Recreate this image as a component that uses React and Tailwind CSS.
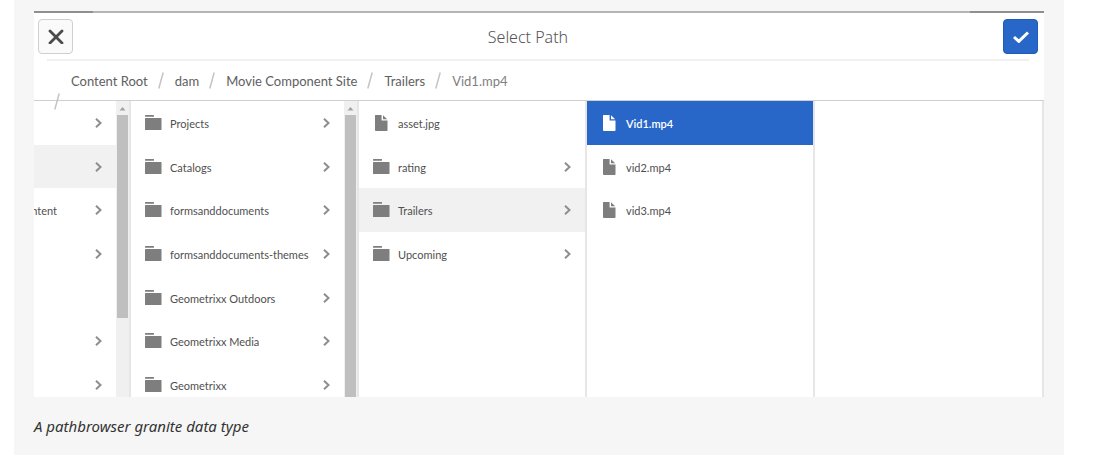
import React from "react";

const columns = [
  {
    id: "root",
    clipped: true,
    thumb: "h-[203px]",
    items: [
      { arrow: true },
      { arrow: true, active: true },
      { name: "ntent", arrow: true },
      { arrow: true },
      {},
      { arrow: true },
      { arrow: true },
    ],
  },
  {
    id: "dam",
    thumb: "flex-1",
    items: [
      { name: "Projects", type: "folder", arrow: true },
      { name: "Catalogs", type: "folder", arrow: true },
      { name: "formsanddocuments", type: "folder", arrow: true },
      { name: "formsanddocuments-themes", type: "folder", arrow: true },
      { name: "Geometrixx Outdoors", type: "folder", arrow: true },
      { name: "Geometrixx Media", type: "folder", arrow: true },
      { name: "Geometrixx", type: "folder", arrow: true },
    ],
  },
  {
    id: "site",
    items: [
      { name: "asset.jpg", type: "file" },
      { name: "rating", type: "folder", arrow: true },
      { name: "Trailers", type: "folder", arrow: true, active: true },
      { name: "Upcoming", type: "folder", arrow: true },
    ],
  },
  {
    id: "trailers",
    items: [
      { name: "Vid1.mp4", type: "file", selected: true },
      { name: "vid2.mp4", type: "file" },
      { name: "vid3.mp4", type: "file" },
    ],
  },
];

const crumbs = ["Content Root", "dam", "Movie Component Site", "Trailers", "Vid1.mp4"];

function Slash({ className = "" }) {
  return (
    <svg width="6" height="17" viewBox="0 0 6 17" className={`shrink-0 ${className}`} aria-hidden="true">
      <path d="M5.2 0.5 L0.8 16.5" stroke="#c4c4c4" strokeWidth="1.5" />
    </svg>
  );
}

function ItemIcon({ type }) {
  if (type === "folder") {
    return (
      <svg width="17" height="16" viewBox="0 0 17 16" fill="currentColor" aria-hidden="true">
        <rect x="0" y="0" width="9" height="1.7" rx="0.5" />
        <rect x="0" y="3" width="16.5" height="12" rx="0.6" />
      </svg>
    );
  }
  return (
    <svg width="17" height="16" viewBox="0 0 17 16" fill="currentColor" aria-hidden="true">
      <path d="M2.5 0 H8.6 V5.4 H14.5 V15.3 Q14.5 16 13.8 16 H3 Q2 16 2 15.3 V0.5 Q2 0 2.5 0 Z" />
      <path d="M10 0.2 L14.2 4.2 H10 Z" />
    </svg>
  );
}

function Chevron() {
  return (
    <svg width="7" height="10" viewBox="0 0 7 10" fill="none" className="shrink-0" aria-hidden="true">
      <path d="M1 0.8 L5.5 5 L1 9.2" stroke="#8e8e8e" strokeWidth="2" />
    </svg>
  );
}

function Item({ item, clipped }) {
  const state = item.selected
    ? "bg-[#2867c8] text-white font-semibold"
    : item.active
      ? "bg-[#f1f1f1] text-[#505050]"
      : "text-[#505050]";
  if (!item.name && !item.arrow) {
    return <li />;
  }
  return (
    <li>
      <button
        type="button"
        aria-label={item.name ? undefined : "Open folder"}
        className={`flex h-full w-full items-center pt-px text-left ${clipped ? "justify-end pr-[14px]" : "px-[14px]"} ${state}`}
      >
        {item.type && (
          <span className={`mr-2 ${item.selected ? "text-white" : "text-[#7e7e7e]"}`}>
            <ItemIcon type={item.type} />
          </span>
        )}
        <span className={`whitespace-nowrap pt-0.5 text-[11px] leading-4 ${clipped ? "mr-[38px]" : "flex-1"}`}>
          {item.name}
        </span>
        {item.arrow && <Chevron />}
      </button>
    </li>
  );
}

function Column({ column }) {
  return (
    <div
      className={`flex shrink-0 justify-end overflow-hidden border-r-2 border-[#e6e6e6] ${column.clipped ? "w-[97px]" : "w-[228px]"}`}
    >
      <ul className="grid h-[305px] min-w-0 flex-1 grid-cols-1 grid-rows-7">
        {column.items.map((item, i) => (
          <Item key={i} item={item} clipped={column.clipped} />
        ))}
      </ul>
      {column.thumb && (
        <div className="flex w-[13px] shrink-0 flex-col bg-[#f0f0f0] px-px">
          <svg width="11" height="14" viewBox="0 0 11 14" className="shrink-0" aria-hidden="true">
            <path d="M2.5 9.5 L5.5 6 L8.5 9.5 Z" fill="#a3a3a3" />
          </svg>
          <div className={`bg-[#bfbfbf] ${column.thumb}`} />
        </div>
      )}
    </div>
  );
}

export default function App() {
  return (
    <div className="bg-white font-['Lato',sans-serif]">
      <figure className="ml-[14px] mr-[41px] bg-[#f6f6f6] px-5 pb-[17px] pt-[11px]">
        <div className="bg-white">
          <div className="flex h-0.5">
            <div className="w-[59px] bg-[#8f8f8f]" />
            <div className="flex-1 bg-[#b4b4b4]" />
            <div className="w-[74px] bg-[#8f8f8f]" />
          </div>

          <header className="flex h-[46px] items-center pl-1 pr-1.5">
            <button
              type="button"
              aria-label="Close"
              className="flex size-[35px] items-center justify-center rounded-sm border border-[#cfcfcf] bg-[#fafafa]"
            >
              <svg width="16" height="16" viewBox="0 0 16 16" aria-hidden="true">
                <path d="M2 3 L14 15 M14 3 L2 15" stroke="#4a4a4a" strokeWidth="2.8" strokeLinecap="round" />
              </svg>
            </button>
            <h2 className="flex-1 pr-5 pt-0.5 text-center font-['Noto_Sans',sans-serif] text-base font-light text-[#555]">
              Select Path
            </h2>
            <button
              type="button"
              aria-label="Confirm"
              className="flex size-[35px] items-center justify-center rounded-sm border border-[#1f5bb8] bg-[#2867c8]"
            >
              <svg width="18" height="14" viewBox="0 0 18 14" fill="none" aria-hidden="true">
                <path d="M2 8 L6.8 12.4 L16 3.5" stroke="#fff" strokeWidth="3" />
              </svg>
            </button>
          </header>
          <div className="ml-[13px] mr-[15px] h-0.5 bg-[#f1f1f1]" />

          <nav aria-label="Breadcrumb" className="relative flex h-10 items-center border-b border-[#cfcfcf] pl-[37px]">
            <Slash className="absolute left-5 top-8" />
            <ol className="flex items-center">
              {crumbs.map((crumb, i) => (
                <li key={crumb} className="flex items-center">
                  {i > 0 && <Slash className="ml-[10px] mr-[11px]" />}
                  <a
                    href="#"
                    className={`whitespace-nowrap text-[13px] leading-5 ${i === crumbs.length - 1 ? "text-[#808080]" : "text-[#606060]"}`}
                  >
                    {crumb}
                  </a>
                </li>
              ))}
            </ol>
          </nav>

          <div className="flex h-[296px] overflow-hidden">
            {columns.map((column) => (
              <Column key={column.id} column={column} />
            ))}
            <div className="flex-1 border-r-2 border-[#e6e6e6]" />
          </div>
        </div>
        <figcaption className="pt-[17px] font-['Noto_Sans',sans-serif] text-[15px] italic leading-6 text-[#333]">
          A pathbrowser granite data type
        </figcaption>
      </figure>
    </div>
  );
}
